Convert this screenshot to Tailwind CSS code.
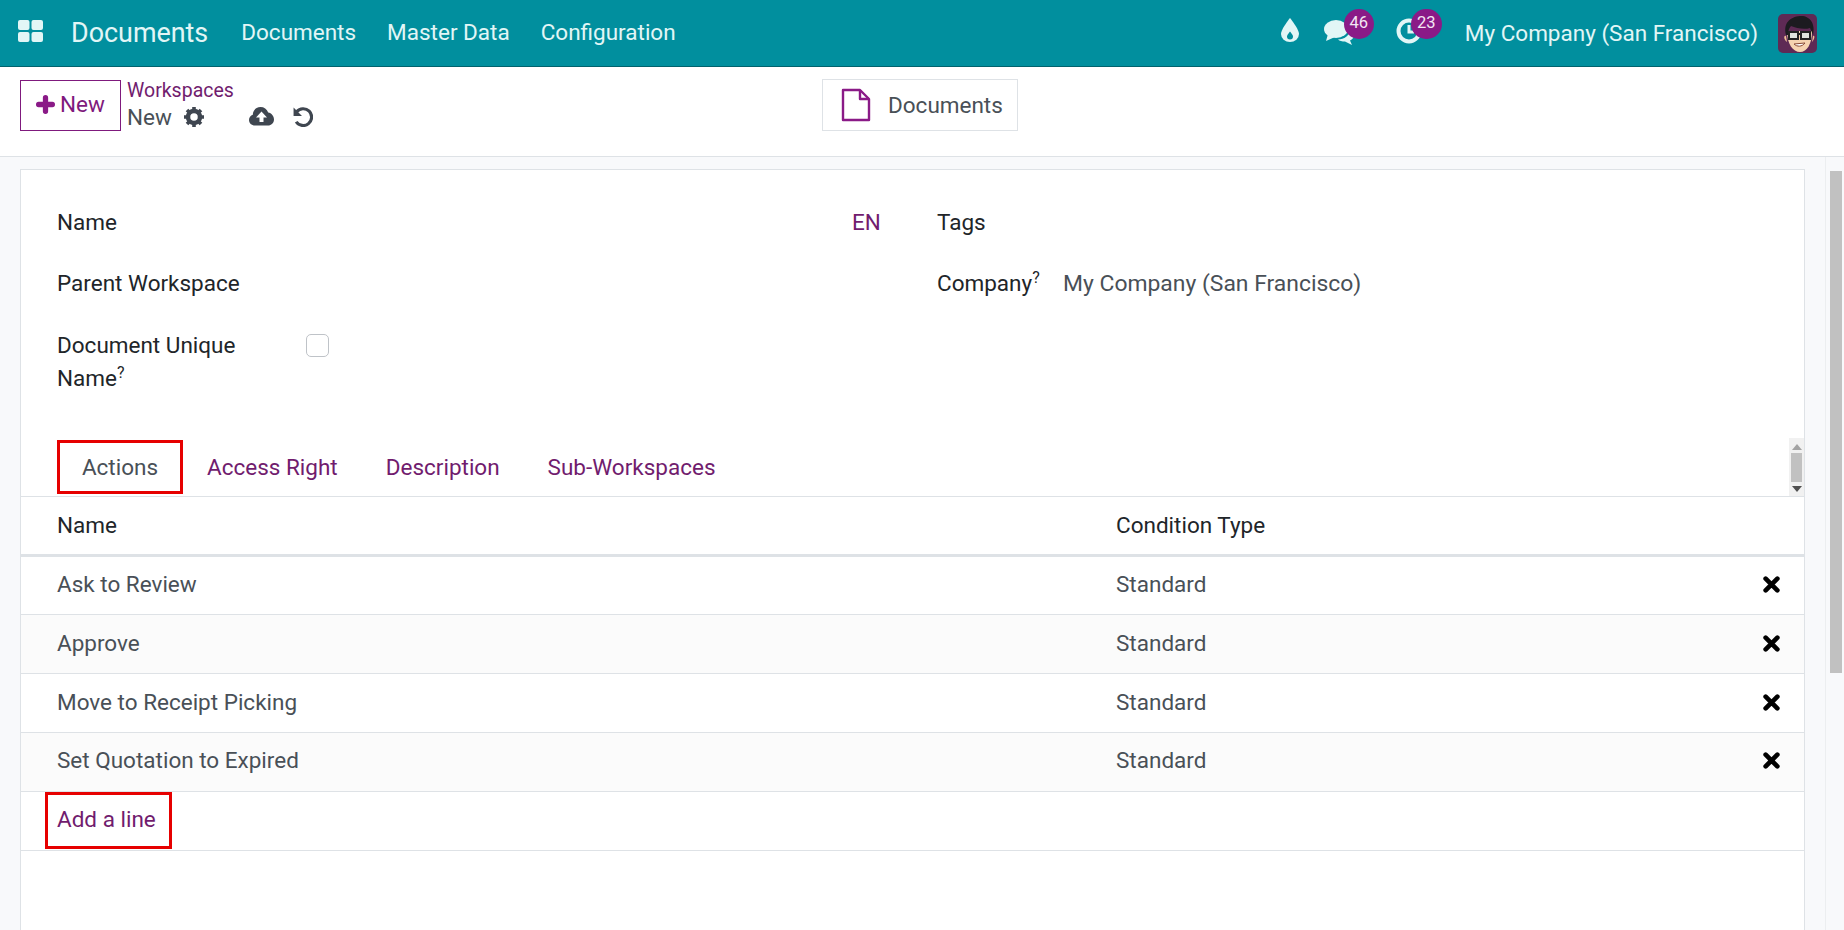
<!DOCTYPE html>
<html lang="en">
  <head>
    <meta charset="UTF-8" />
    <title>Documents</title>
    <script src="https://cdn.jsdelivr.net/npm/@tailwindcss/browser@4"></script>
  </head>
  <body class="font-['Roboto',sans-serif] text-[22.5px] leading-[32px] text-[#212529] bg-[#f8f9fb]">
    <div class="h-[930px] w-[1844px] flex flex-col overflow-hidden">
      <!-- top bar -->
      <header class="h-[67px] shrink-0 bg-[#018f9e] border-b border-[#01626d] flex items-center text-[#e2f6f6]">
        <svg class="ml-[18px] w-[25px] h-[22px] mb-[4px]" viewBox="0 0 25 22" fill="#e2f6f6">
          <rect x="0" y="0" width="11.5" height="10" rx="2" />
          <rect x="13.5" y="0" width="11.5" height="10" rx="2" />
          <rect x="0" y="12" width="11.5" height="10" rx="2" />
          <rect x="13.5" y="12" width="11.5" height="10" rx="2" />
        </svg>
        <span class="ml-[28px] mb-[1px] text-[26.9px]">Documents</span>
        <nav class="ml-[33px] mb-[3px] flex gap-[31px]">
          <a>Documents</a>
          <a>Master Data</a>
          <a>Configuration</a>
        </nav>
        <div class="ml-auto flex items-center h-full relative pl-[1px] translate-x-[1px]">
          <svg class="w-[18px] h-[24px] mt-[-6px]" viewBox="0 0 18 24">
            <path fill="#e2f6f6" d="M9 0C9 0 0 11 0 16a9 8 0 0 0 18 0C18 11 9 0 9 0z" />
            <path fill="#018f9e" d="M9 13.5C9 13.5 6 17 6 18.5a3 3 0 0 0 6 0C12 17 9 13.5 9 13.5z" />
          </svg>
          <div class="relative ml-[25px] w-[50px] h-[38px]">
            <svg class="absolute left-0 top-[6px] w-[30px] h-[25px]" viewBox="0 0 30 25" fill="#e2f6f6">
              <ellipse cx="12" cy="9" rx="12" ry="9" />
              <path d="M4 14 L2 21 L11 17z" />
              <path d="M26 9c2.500 1.500 4 3.500 4 6 0 2.500-1.500 4.500-4 5.500l2 4.500-7-3.500c-3 0-5.500-.5-7-2 6 0 12-4 12-10.500z" />
            </svg>
            <span class="absolute left-[20px] top-[-5px] w-[30px] h-[30px] rounded-full bg-[#8a1a87] text-[#f3e6f3] text-[16.5px] leading-[27px] text-center">46</span>
          </div>
          <div class="relative ml-[22px] w-[46px] h-[38px]">
            <svg class="absolute left-0 top-[4px] w-[26px] h-[26px]" viewBox="0 0 26 26" fill="none" stroke="#e2f6f6">
              <circle cx="13" cy="13" r="10.500" stroke-width="4" />
              <path d="M13 7v7h5" stroke-width="3" />
            </svg>
            <span class="absolute left-[15px] top-[-5px] w-[31px] h-[30px] rounded-full bg-[#8a1a87] text-[#f3e6f3] text-[16.5px] leading-[27px] text-center">23</span>
          </div>
          <span class="ml-[23px] mb-[1px]">My Company (San Francisco)</span>
          <svg class="ml-[20px] mr-[28px] w-[39px] h-[39px]" viewBox="0 0 39 39">
            <rect width="39" height="39" rx="5" fill="#5e2a55" />
            <path d="M8 22c-2-1-3 3 1 6M35 22c2-1 2 3-1 6" fill="#eebd96" />
            <path d="M9 17C9 30 15 38 22 38 29 38 34 30 34 17z" fill="#f5d3b0" />
            <path d="M8 21C5 9 12 3 22 2 31 1 38 9 35 21L32 14C26 16 18 14 13 12 11 14 10 17 10 21z" fill="#1c1b20" />
            <rect x="11" y="18" width="9" height="7" fill="#dfe3dd" stroke="#222" stroke-width="2" />
            <rect x="23" y="18" width="9" height="7" fill="#dfe3dd" stroke="#222" stroke-width="2" />
            <path d="M20 20h3" stroke="#222" stroke-width="2" />
            <path d="M16 30c3 3 8 3 11-1z" fill="#fff" stroke="#8a4a35" stroke-width="1" />
          </svg>
        </div>
      </header>

      <!-- control panel -->
      <div class="h-[90px] shrink-0 bg-white border-b border-[#dee2e6] grid grid-cols-[822px_196px_1fr] pt-[12px]">
        <div class="pl-[20px] flex items-start">
          <button class="mt-[1px] w-[101px] h-[51px] pb-[3px] border border-[#7f1a7d] flex items-center justify-center gap-[5px] text-[#7f1a7d]">
            <svg class="w-[19px] h-[19px]" viewBox="0 0 18 18" stroke="#8a1a87" stroke-width="5" stroke-linecap="round"><path d="M9 2.500v13M2.500 9h13" /></svg>
            New
          </button>
          <div class="ml-[6px] mt-[-4px]">
            <a class="block text-[#711c6e] text-[19.5px] leading-[32px]">Workspaces</a>
            <div class="flex items-center h-[28px] mt-[-4px] text-[#495057]">
              <span>New</span>
              <svg class="ml-[12px] w-[20px] h-[20px] mb-[1px]" viewBox="0 0 20 20" fill="#3f4650">
                <circle cx="10" cy="10" r="6" fill="none" stroke="#3f4650" stroke-width="4.500" />
                <g stroke="#3f4650" stroke-width="3.600">
                  <path d="M10 0v4M10 16v4M0 10h4M16 10h4M3 3l2.800 2.800M14.200 14.200L17 17M3 17l2.800-2.800M14.200 5.800L17 3" />
                </g>
              </svg>
              <svg class="ml-[45px] w-[25px] h-[20px] mb-[3px]" viewBox="0 0 25 20">
                <path fill="#3f4650" d="M6 19.500C2.500 19.500 0 17 0 14c0-2.500 1.500-4.500 3.800-5.300C3.800 4.500 7 1 11.500 1 15 1 18 3 19.200 6.500 22.500 7 25 10 25 13.500c0 3.500-2.800 6-6 6z" />
                <path fill="#fff" d="M12.500 5.500L18 11.500h-3.500v4.500h-4v-4.500H7z" />
              </svg>
              <svg class="ml-[18px] w-[21px] h-[21px] mb-[2px]" viewBox="0 0 20 20" fill="none" stroke="#3f4650" stroke-width="3">
                <path d="M4.500 5.500A8 8 0 1 1 4 15" />
                <path d="M1.500 1.500v8h8z" fill="#3f4650" stroke="none" />
              </svg>
            </div>
          </div>
        </div>
        <button class="h-[52px] border border-[#dee2e6] flex items-center text-[#495057]">
          <svg class="ml-[18px] w-[30px] h-[34px]" viewBox="0 0 30 34" fill="none" stroke="#8a1a87" stroke-width="2.400" stroke-linejoin="round">
            <path d="M2 2h17l9 9v21H2z" />
            <path d="M19 2v9h9" />
          </svg>
          <span class="ml-[17px]">Documents</span>
        </button>
      </div>

      <div class="flex-1 flex min-h-0">
        <!-- sheet -->
        <main class="w-[1825px] pl-[20px] pr-[20px] pt-[12px]">
          <div class="h-full bg-white border border-[#dee2e6] border-b-0">
            <section class="grid grid-cols-[249px_546px_85px_126px_1fr] pl-[36px] pt-[36px] h-[268px] content-start">
              <div class="h-[61px]">Name</div>
              <div></div>
              <div class="text-[#711c6e]">EN</div>
              <div class="col-span-2">Tags</div>

              <div class="h-[62px]">Parent Workspace</div>
              <div></div>
              <div></div>
              <div>Company<sup class="text-[16px]">?</sup></div>
              <div class="text-[#495057] text-[22.9px] pt-[1px]">My Company (San Francisco)</div>

              <div class="leading-[33px]">Document Unique<br />Name<sup class="text-[16px]">?</sup></div>
              <div><div class="mt-[5px] w-[23px] h-[23px] rounded-[5px] border border-[#bfc3c8]"></div></div>
            </section>

            <!-- tabs -->
            <div class="h-[59px] flex border-b border-[#dee2e6] pl-[36px]">
              <a class="mt-[2px] w-[126px] h-[54px] border-[3px] border-[#e60000] flex items-center justify-center text-[#495057]">Actions</a>
              <div class="flex items-center gap-[48px] pl-[24px] text-[#711c6e]">
                <a>Access Right</a>
                <a>Description</a>
                <a>Sub-Workspaces</a>
              </div>
              <div class="ml-auto w-[15px] h-[58px] bg-[#f1f1f1] flex flex-col items-center">
                <span class="mt-[6px] w-0 h-0 border-x-[5px] border-x-transparent border-b-[6px] border-b-[#a3a3a3]"></span>
                <span class="mt-[3px] w-[11px] h-[29px] bg-[#c1c1c1]"></span>
                <span class="mt-[4px] w-0 h-0 border-x-[5px] border-x-transparent border-t-[6px] border-t-[#505050]"></span>
              </div>
            </div>

            <!-- list -->
            <div class="h-[60px] pb-[1px] grid grid-cols-[1059px_1fr] items-center pl-[36px] border-b-[3px] border-[#dee2e6]">
              <div>Name</div>
              <div>Condition Type</div>
            </div>
            <div class="text-[#495057]">
              <div class="h-[58px] pb-[3px] grid grid-cols-[1059px_1fr_24px] items-center pl-[36px] pr-[21px] border-b border-[#dee2e6]">
                <div>Ask to Review</div>
                <div>Standard</div>
                <svg class="w-[17px] h-[17px] justify-self-center" viewBox="0 0 16 16" stroke="#000" stroke-width="4.400" stroke-linecap="round"><path d="M2.500 2.500l11 11M13.500 2.500l-11 11" /></svg>
              </div>
              <div class="h-[59px] pb-[2px] grid grid-cols-[1059px_1fr_24px] items-center pl-[36px] pr-[21px] border-b border-[#dee2e6] bg-[#fbfbfb]">
                <div>Approve</div>
                <div>Standard</div>
                <svg class="w-[17px] h-[17px] justify-self-center" viewBox="0 0 16 16" stroke="#000" stroke-width="4.400" stroke-linecap="round"><path d="M2.500 2.500l11 11M13.500 2.500l-11 11" /></svg>
              </div>
              <div class="h-[59px] pb-[2px] grid grid-cols-[1059px_1fr_24px] items-center pl-[36px] pr-[21px] border-b border-[#dee2e6]">
                <div>Move to Receipt Picking</div>
                <div>Standard</div>
                <svg class="w-[17px] h-[17px] justify-self-center" viewBox="0 0 16 16" stroke="#000" stroke-width="4.400" stroke-linecap="round"><path d="M2.500 2.500l11 11M13.500 2.500l-11 11" /></svg>
              </div>
              <div class="h-[59px] pb-[4px] grid grid-cols-[1059px_1fr_24px] items-center pl-[36px] pr-[21px] border-b border-[#dee2e6] bg-[#fbfbfb]">
                <div>Set Quotation to Expired</div>
                <div>Standard</div>
                <svg class="w-[17px] h-[17px] justify-self-center" viewBox="0 0 16 16" stroke="#000" stroke-width="4.400" stroke-linecap="round"><path d="M2.500 2.500l11 11M13.500 2.500l-11 11" /></svg>
              </div>
              <div class="h-[59px] border-b border-[#dee2e6] pl-[24px]">
                <a class="w-[127px] h-[57px] border-[3px] border-[#e60000] flex items-center pl-[9px] pb-[3px] text-[#711c6e]">Add a line</a>
              </div>
            </div>
          </div>
        </main>

        <!-- page scrollbar -->
        <div class="w-[19px] pl-[4px] pt-[14px] border-l border-[#eceef0] bg-[#f8f9fb]">
          <div class="w-[12px] h-[502px] bg-[#c1c1c1]"></div>
        </div>
      </div>
    </div>
  </body>
</html>
